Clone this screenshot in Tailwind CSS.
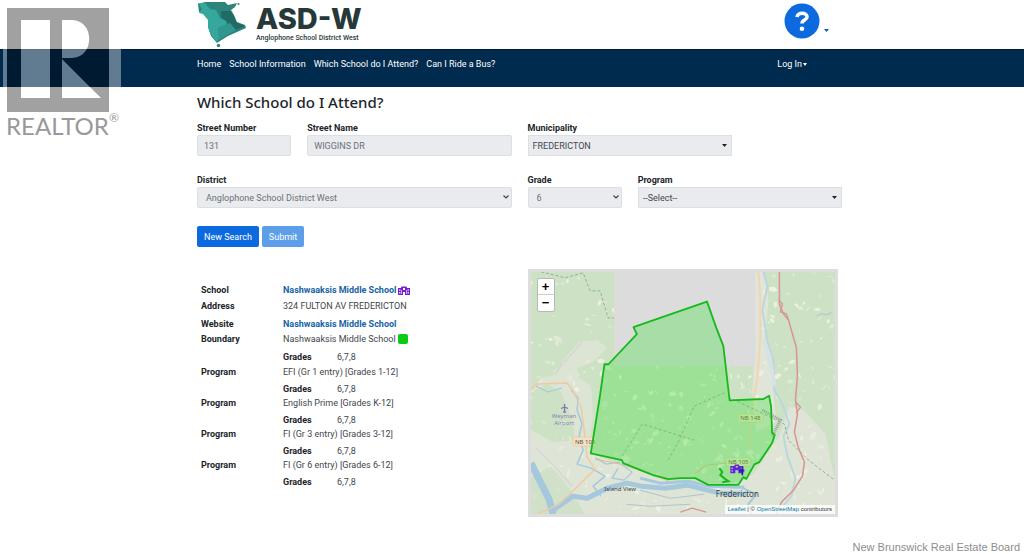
<!DOCTYPE html>
<html lang="en">
  <head>
    <meta charset="utf-8" />
    <meta name="viewport" content="width=device-width, initial-scale=1.0" />
    <title>ASD-W | Which School do I Attend?</title>
    <script src="https://cdn.jsdelivr.net/npm/@tailwindcss/browser@4"></script>
  </head>

  <body
    class="relative min-h-screen bg-white font-['Roboto','Open_Sans',sans-serif] text-[9px] leading-[14px] text-[#212529]"
  >
    <header class="pl-[15px]">
      <div class="mx-auto flex h-[49px] max-w-[645px] justify-between">
        <a href="#" class="flex gap-2">
          <svg class="h-12 w-[51px]" viewBox="197 0 51 48" aria-hidden="true">
            <path fill="#2b857c" d="M198 4l7-2h20l3 3 9-2-2 4-4 3 3 5 3 7 8 3 1 3-18 8-8 5-3 2-6-7-3-9V13l-9-1z" />
            <path fill="#35a79c" d="M198 3l7 0 5 6 6 1 4 8 10 5-12 5 1 10-2 4-6-7-3-8 0-7-5-6-4-1 3-4z" />
            <path fill="#1f625e" d="M221 11h9l4 5 2 6 9 4-9 4-8-3-2-6-5-4z" opacity=".75" />
            <path fill="#2f978d" d="M218 28l12-5 6 7-9 5-8 5z" />
            <circle cx="218.500" cy="45.500" r="1.700" fill="#2b857c" />
            <circle cx="238.500" cy="4" r="1" fill="#2b857c" />
          </svg>
          <span class="flex flex-col pt-1 text-[#26383a]">
            <span class="font-['Inter',sans-serif] text-[29px] leading-[30px] font-extrabold">ASD-W</span>
            <span class="text-[7px] leading-[9px] font-medium">Anglophone School District West</span>
          </span>
        </a>
        <button type="button" class="mr-[13px] flex items-center gap-1" aria-label="Help">
          <svg class="-mt-2 size-9" viewBox="0 0 36 36">
            <circle cx="18" cy="18" r="17.500" fill="#0d6ade" />
            <path d="M13 14c.5-5 10-5 10 0 0 3.200-5 3-5 6.500" fill="none" stroke="#fff" stroke-width="3.600" />
            <circle cx="18" cy="25.800" r="2.300" fill="#fff" />
          </svg>
          <svg class="mt-3 h-[3px] w-[5px]" viewBox="0 0 5 3"><path d="M0 0h5L2.500 3z" fill="#0d5bb5" /></svg>
        </button>
      </div>
    </header>

    <nav class="h-[38px] border-t border-[#011c33] bg-[#002b4e] pt-[7px] pl-[15px] text-white">
      <div class="mx-auto flex max-w-[645px] gap-2">
        <a href="#">Home</a>
        <a href="#">School Information</a>
        <a href="#">Which School do I Attend?</a>
        <a href="#">Can I Ride a Bus?</a>
        <a href="#" class="mr-[35px] ml-auto flex items-center gap-px">
          Log In
          <svg class="h-[3px] w-1" viewBox="0 0 4 3"><path d="M0 0h4L2 3z" fill="#fff" /></svg>
        </a>
      </div>
    </nav>

    <main class="pl-[15px]">
      <div class="mx-auto max-w-[645px]">
        <h1 class="pt-[5px] font-['Noto_Sans',sans-serif] text-[15px] leading-5 font-medium">Which School do I Attend?</h1>

        <form class="grid grid-cols-6 gap-x-4 pt-[9px]">
          <div>
            <label for="number" class="block font-bold">Street Number</label>
            <input id="number" value="131" readonly class="h-[21px] w-full rounded-[2px] border border-[#dcdfe3] bg-[#e9ebee] px-[6px] text-[#6b7177]" />
          </div>
          <div class="col-span-2">
            <label for="street" class="block font-bold">Street Name</label>
            <input id="street" value="WIGGINS DR" readonly class="h-[21px] w-full rounded-[2px] border border-[#dcdfe3] bg-[#e9ebee] px-[6px] text-[#6b7177]" />
          </div>
          <div class="relative col-span-2">
            <label for="municipality" class="block font-bold">Municipality</label>
            <select id="municipality" class="h-[21px] w-full appearance-none border border-[#dcdfe3] bg-[#e9ebee] px-1 text-[#43484d]">
              <option>FREDERICTON</option>
            </select>
            <svg class="pointer-events-none absolute right-[5px] bottom-[9px] h-[3px] w-[5px]" viewBox="0 0 5 3"><path d="M0 0h5L2.500 3z" fill="#222" /></svg>
          </div>

          <div class="relative col-span-3 col-start-1 mt-[17px]">
            <label for="district" class="block font-bold">District</label>
            <select id="district" class="h-[21px] w-full appearance-none rounded-[2px] border border-[#dcdfe3] bg-[#e9ebee] px-2 text-[#6b7177]">
              <option>Anglophone School District West</option>
            </select>
            <svg class="pointer-events-none absolute right-[3px] bottom-[9px] h-1 w-[6px]" viewBox="0 0 6 4"><path d="M.5.5L3 3 5.500.5" fill="none" stroke="#444" stroke-width="1.200" /></svg>
          </div>
          <div class="relative mt-[17px]">
            <label for="grade" class="block font-bold">Grade</label>
            <select id="grade" class="h-[21px] w-full appearance-none rounded-[2px] border border-[#dcdfe3] bg-[#e9ebee] px-2 text-[#6b7177]">
              <option>6</option>
            </select>
            <svg class="pointer-events-none absolute right-[3px] bottom-[9px] h-1 w-[6px]" viewBox="0 0 6 4"><path d="M.5.5L3 3 5.500.5" fill="none" stroke="#444" stroke-width="1.200" /></svg>
          </div>
          <div class="relative col-span-2 mt-[17px]">
            <label for="program" class="block font-bold">Program</label>
            <select id="program" class="h-[21px] w-full appearance-none border border-[#dcdfe3] bg-[#e9ebee] px-1 text-[#43484d]">
              <option>--Select--</option>
            </select>
            <svg class="pointer-events-none absolute right-[5px] bottom-[9px] h-[3px] w-[5px]" viewBox="0 0 5 3"><path d="M0 0h5L2.500 3z" fill="#222" /></svg>
          </div>

          <div class="col-span-6 flex gap-[3px] pt-[18px]">
            <button type="button" class="h-[21px] rounded-[2px] bg-[#0d6ade] px-[7px] text-white">New Search</button>
            <button type="submit" disabled class="h-[21px] rounded-[2px] bg-[#5c9ee8] px-[7px] text-white">Submit</button>
          </div>
        </form>

        <section class="grid grid-cols-2 gap-x-4 pt-[22px]">
          <dl class="grid grid-cols-[82px_54px_1fr] content-start pt-[14px] pl-1 text-[#41464b]">
            <dt class="font-bold text-[#212529]">School</dt>
            <dd class="col-span-2 flex items-center gap-[2px]">
              <a href="#" class="font-bold text-[#1664a5]">Nashwaaksis Middle School</a>
              <svg class="h-[9px] w-3" viewBox="0 0 12 9">
                <path
                  fill="#7a1fd0" fill-rule="evenodd"
                  d="M0 2h3l.5-1.500h5L9 2h3v7H7V6H5v3H0zM1.200 3.500v1.300h1.200V3.500zM1.200 6v1.500h1.200V6zM9.600 3.500v1.300h1.200V3.500zM9.600 6v1.500h1.200V6zM5 2v2h2V2zM3.400 4v4h.6V4zM8 4v4h.6V4z"
                />
              </svg>
            </dd>
            <dt class="mt-[2px] font-bold text-[#212529]">Address</dt>
            <dd class="col-span-2 mt-[2px]">324 FULTON AV FREDERICTON</dd>
            <dt class="mt-1 font-bold text-[#212529]">Website</dt>
            <dd class="col-span-2 mt-1"><a href="#" class="font-bold text-[#1664a5]">Nashwaaksis Middle School</a></dd>
            <dt class="mt-px font-bold text-[#212529]">Boundary</dt>
            <dd class="col-span-2 mt-px flex items-center gap-[2px]">
              Nashwaaksis Middle School
              <span class="size-[10px] rounded-[2px] bg-[#0bcb12]"></span>
            </dd>
            <dt class="col-start-2 mt-1 font-bold text-[#212529]">Grades</dt>
            <dd class="mt-1">6,7,8</dd>
            <dt class="mt-px font-bold text-[#212529]">Program</dt>
            <dd class="col-span-2 mt-px">EFI (Gr 1 entry) [Grades 1-12]</dd>
            <dt class="col-start-2 mt-[3px] font-bold text-[#212529]">Grades</dt>
            <dd class="mt-[3px]">6,7,8</dd>
            <dt class="font-bold text-[#212529]">Program</dt>
            <dd class="col-span-2">English Prime [Grades K-12]</dd>
            <dt class="col-start-2 mt-[3px] font-bold text-[#212529]">Grades</dt>
            <dd class="mt-[3px]">6,7,8</dd>
            <dt class="font-bold text-[#212529]">Program</dt>
            <dd class="col-span-2">FI (Gr 3 entry) [Grades 3-12]</dd>
            <dt class="col-start-2 mt-[3px] font-bold text-[#212529]">Grades</dt>
            <dd class="mt-[3px]">6,7,8</dd>
            <dt class="font-bold text-[#212529]">Program</dt>
            <dd class="col-span-2">FI (Gr 6 entry) [Grades 6-12]</dd>
            <dt class="col-start-2 mt-[3px] font-bold text-[#212529]">Grades</dt>
            <dd class="mt-[3px]">6,7,8</dd>
          </dl>

          <div class="relative mr-1 h-[248px] overflow-hidden border-3 border-[#dddddd]">
            <svg class="size-full" viewBox="531 272 304 242" preserveAspectRatio="xMidYMid slice">
              <rect x="531" y="272" width="304" height="242" fill="#cde2c4" />
              <!-- farmland and built-up ground -->
              <g fill="#e3e6dc">
                <path d="M531 430l22 12 30-2 10 14 30 12 46 14 60 4 24-10 26-38 10-30 14 4 22 24 10 50 30 12v32H531z" opacity=".75" />
                <path d="M531 392l10-14 16-4 8-16 14-16 18-2 10 8-14 14-16 6 2 10 12 8 2 30-4 30-12 4-6-34-10-24-14-8z" opacity=".7" />
                <path d="M748 272h16l4 30-4 40 8 40 4 40-20 10-4-40 3-50z" opacity=".9" />
              </g>
              <g id="clearings" fill="#f0f1e4"></g>
              <path d="M531 477l20-11 18 22 16 26h-54z" fill="#c6dcc0" opacity=".6" />
              <rect x="614" y="272" width="141" height="94" fill="#dcdcdc" />
              <!-- water -->
              <g fill="none" stroke="#a5c8dc" stroke-linejoin="round">
                <path d="M531 463l10 20 8 16 4 15" stroke-width="7" />
                <path d="M553 510l20-14 14 2 20-10 20-5 14 3 24 2 22-3 20 5 14 3 26 1" stroke-width="5" />
                <path d="M640 478l20 5 28-2 20 5 36 1" stroke-width="3" />
                <path d="M742 488l14 6-8 10 4 12" stroke-width="2" />
                <path d="M763 272l4 14-5 24 3 18 3 18 5 14 1 30 8 14 7 20-6 12 4 20 8 22-4 18-12 14" stroke-width="2" stroke="#bcd6e0" />
                <path d="M763 340l6 16 5 30" stroke-width="4" stroke="#d5e3e6" />
                <path d="M571 390l7 8-1 12 5 14-3 12 4 14-6 14 14 4 14 8-12 10 8 10" stroke-width="1.500" />
                <path d="M596 458l10 6 12-2 14 10-8 8-12-2 6-10M536 386l12 6 14-4" stroke-width="1.200" />
              </g>
              <!-- roads -->
              <g fill="none">
                <path d="M531 389l6-5 30-1 6 8 8 16 4 30 2 20 8 12-18 18-18 17-22 10" stroke="#efc9a6" stroke-width="1.500" />
                <path d="M758 272l2 26 0 40-3 40-5 30-4 40" stroke="#efd6b0" stroke-width="2" />
                <path d="M536 448l20 20 16 18M556 372l26-30" stroke="#d9d2d8" stroke-width="1.200" />
                <path d="M694 474l12-9 22-2 12 4M595 459l30 6 44 16" stroke="#e8b787" stroke-width="1" />
                <path d="M779 272v32l4 10 5 6 8 28 1 28-2 24 2 14-3 18 4 16 6 14-2 14-9 14-12 12-10 24" stroke="#d99391" stroke-width="1.500" />
                <path d="M778 300l4 4-2 8 6 2 2 6M795 402l5 5-4 6M680 512l12-4 14 4" stroke="#d99391" stroke-width="1.300" />
                <path d="M541 272l24 6 18-5 7 18 10 0 8 27h6M622 456l20-32 52 16M728 397l56 27 4 16 20 20 26 20M668 460l10-18 16-36 32-14" stroke="#8ba08d" stroke-width=".8" stroke-dasharray="3 2" />
                <path d="M762 410l18 10-8 16" stroke="#9b9ba0" stroke-width="3" stroke-dasharray="1 1" />
                <path d="M816 316l5-2 5 1 6-3M640 490l30 8 34-4M626 504l24 2 40-2" stroke="#b0c4cf" stroke-width="1" />
              </g>
              <g fill="#f3e7c4" stroke="#d6c68d" stroke-width=".5">
                <rect x="573" y="437" width="23" height="9" rx="1" fill="#f6dfc8" />
                <rect x="738" y="414" width="25" height="8" rx="1" />
                <rect x="726" y="458" width="24" height="8" rx="1" />
              </g>
              <g class="font-['Noto_Sans',sans-serif]" font-size="6" fill="#5c553f" text-anchor="middle">
                <text x="585" y="444">NB 105</text>
                <text x="750" y="420">NB 148</text>
                <text x="738" y="464">NB 105</text>
              </g>
              <!-- school boundary -->
              <path
                d="M633.300 327.300L706.700 301.700 716 328l7 18 6.300 54.300 33.700-1.300 5.700-3.300 2 11 1 26.300 2.600 2-2.600 8-12.700 19-5 2.300-8 14.400-3-1.700-5 7.700-30 0-13-6.700h-15l-12 1-15-4-30-12-1.300-3-31-6.700 9.300-58.300 4.300-30.700h4l28.400-30z"
                fill="#3ee23e" fill-opacity=".33" stroke="#16b91b" stroke-width="1.800" stroke-linejoin="round"
              />
              <path d="M719 468l3 4-2 3 5 4 3 2-6 1" fill="none" stroke="#16b91b" stroke-width="2" />
              <path
                fill="#6a22dc" fill-rule="evenodd"
                d="M730 466h4l.5-1.500h4l.5 1.500h4v7h-5v-3h-3v3h-5zM731.200 467.500v1.300h1.200v-1.300zM731.200 470v1.500h1.200V470zM740.600 467.500v1.300h1.200v-1.300zM735.500 466v1.500h2V466z"
              />
              <path d="M742 467v8M739 470.500h5" stroke="#241bb0" stroke-width="1.600" />
              <path d="M564.500 404v8M561 408.500l3.500-1.500 3.500 1.500M563 412h3" fill="none" stroke="#8077b0" stroke-width="1.300" />
              <g class="font-['Noto_Sans',sans-serif]" font-size="6" text-anchor="middle">
                <g fill="#8c83b5">
                  <text x="564" y="418">Weyman</text>
                  <text x="564" y="425">Airport</text>
                </g>
                <text x="620" y="491" fill="#3e4246">Island View</text>
                <text x="737" y="497" font-size="8" fill="#3e4246">Fredericton</text>
              </g>
            </svg>

            <div class="absolute top-[6px] left-[6px] flex w-[18px] flex-col rounded-[2px] border border-[#b5bab3] bg-white font-['Liberation_Sans',sans-serif] text-[13px] font-bold text-black">
              <button type="button" class="h-4 border-b border-[#ccc]" aria-label="Zoom in">+</button>
              <button type="button" class="h-4" aria-label="Zoom out">−</button>
            </div>
            <p class="absolute right-0 bottom-0 bg-white/80 px-[3px] font-['Liberation_Sans',sans-serif] text-[6px] leading-[9px] text-[#333]">
              <a href="#" class="text-[#0078a8]">Leaflet</a> | © <a href="#" class="text-[#0078a8]">OpenStreetMap</a> contributors
            </p>
          </div>
        </section>
      </div>
    </main>

    <!-- listing watermarks -->
    <svg class="pointer-events-none absolute top-0 left-0 h-[140px] w-[125px]" viewBox="0 0 125 140" role="img" aria-label="REALTOR">
      <path d="M3 49h4v38H3zM109 49h12v38h-12zM21 20h29v78H21zM62 20h10c23 0 23 38 0 38H62zM62 59l39 39H62z" fill="#fff" fill-opacity=".38" />
      <path fill-rule="evenodd" d="M7 8h102v104H7zM21 20v78h29V20zM62 20v38h10c23 0 23-38 0-38zM62 59v39h39z" fill="#000" fill-opacity=".37" />
      <text x="6" y="135" font-size="24" fill="#999" class="font-['Lato',sans-serif]">REALTOR</text>
      <text x="109" y="122" font-size="12" fill="#999" class="font-['Lato',sans-serif]">®</text>
    </svg>
    <p class="pointer-events-none absolute right-1 bottom-0 font-['Liberation_Sans',sans-serif] text-[11px] leading-[13px] text-[#8d8d8d]">New Brunswick Real Estate Board</p>

    <script>
      // scatter small clearings over the woodland, same layout on every load
      let seed = 7;
      const rand = () => {
        seed = (seed * 16807) % 2147483647;
        return seed / 2147483647;
      };

      let html = '';
      for (let i = 0; i < 420; i++) {
        const x = 531 + rand() * 304;
        const y = 272 + rand() * 242;
        const w = 0.5 + rand() * rand() * 6;
        const h = 0.5 + rand() * 3;
        const turn = rand() * 180;
        html += `<path opacity="${0.4 + rand() * 0.6}" transform="rotate(${turn} ${x} ${y})" d="M${x} ${y}l${w} ${-h} ${w} ${h / 2} ${-w / 2} ${h} ${-w} ${h / 2}z"/>`;
      }
      document.getElementById('clearings').innerHTML = html;
    </script>
  </body>
</html>
